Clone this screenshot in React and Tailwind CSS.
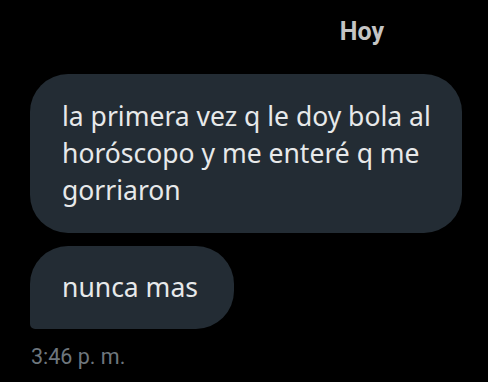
import React from 'react';

const messages = [
  { id: 1, text: 'la primera vez q le doy bola al horóscopo y me enteré q me gorriaron', last: false },
  { id: 2, text: 'nunca mas', last: true },
];

const App = () => {
  return (
    <div className="w-[488px] h-[382px] bg-black overflow-hidden" style={{ fontFamily: 'Roboto, "Noto Sans", sans-serif' }}>
      <div className="flex flex-col pl-[30px] pr-[26px]">
        <div className="h-[64px] flex items-center justify-end pr-[78px] pb-[2px]">
          <span className="text-[25px] font-bold text-[#c4c4c4] leading-none">Hoy</span>
        </div>
        <div className="flex flex-col gap-[13px] mt-[10px]">
          {messages.map((m) => (
            <div
              key={m.id}
              className={`self-start bg-[#232c34] text-[#e7e9ea] text-[26.5px] leading-[37px] pl-[32px] ${
                m.last ? 'rounded-[38px] rounded-bl-[5px] py-[23px] pr-[36px]' : 'rounded-[38px] w-[432px] py-[24px] pr-[22px]'
              }`}
              style={{ fontFamily: '"Noto Sans", sans-serif' }}
            >
              {m.text}
            </div>
          ))}
        </div>
        <div className="mt-[17px] pl-[1px] text-[21.5px] text-[#6e767d] leading-none">3:46 p. m.</div>
      </div>
    </div>
  );
};

export default App;
